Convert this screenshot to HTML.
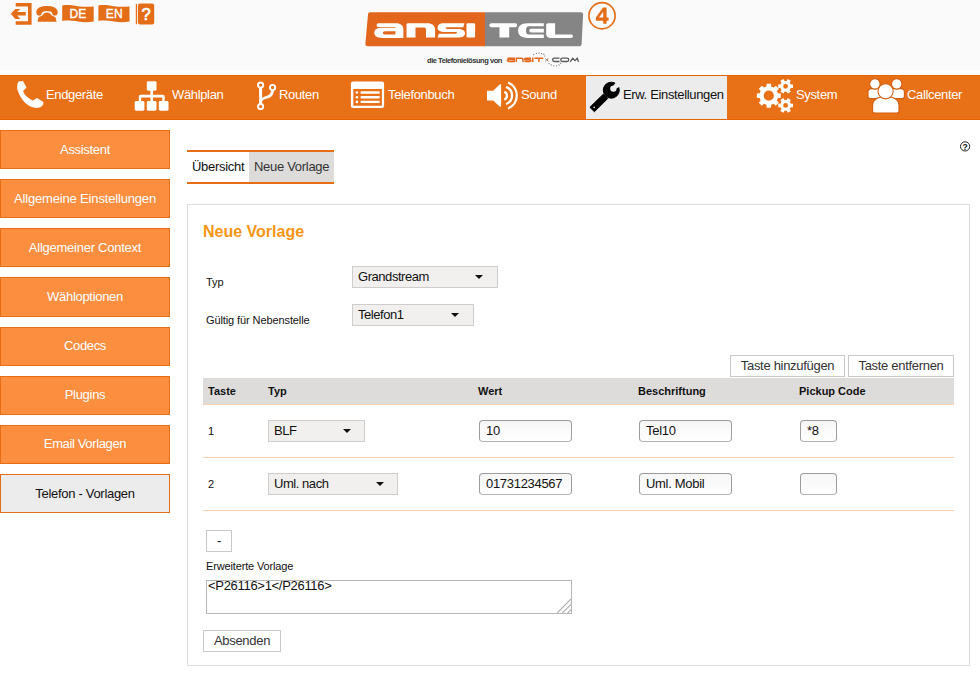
<!DOCTYPE html>
<html><head><meta charset="utf-8">
<style>
*{box-sizing:border-box;margin:0;padding:0}
html,body{width:980px;height:680px;overflow:hidden;background:#fff;font-family:"Liberation Sans",sans-serif;color:#222}
.a{position:absolute;white-space:nowrap}
#top{left:0;top:0;width:980px;height:70px;background:#fafafa}
#nav{left:0;top:75px;width:980px;height:45px;background:#e87016;border-top:1px solid #e36500;border-bottom:1px solid #e36500}
.nt{position:absolute;top:87px;color:#fff;font-size:13px;line-height:15px;letter-spacing:-0.35px;white-space:nowrap}
.side{position:absolute;left:0;width:170px;height:39px;background:#fb8e3f;border:1px solid #e46d15;color:#fff;font-size:13px;text-align:center;line-height:37px;letter-spacing:-0.17px}
.side.act{background:#ececec;color:#111;height:40px;line-height:39px}
.lbl{position:absolute;font-size:11px;color:#111;white-space:nowrap}
.sel{position:absolute;height:22px;background:#f1f0ef;border:1px solid #cfcdcb;font-size:13px;line-height:20px;padding-left:5px;color:#111;letter-spacing:-0.45px;white-space:nowrap}
.sel i{position:absolute;top:8px;width:0;height:0;border-left:4px solid transparent;border-right:4px solid transparent;border-top:4px solid #111}
.inp{position:absolute;height:22px;background:linear-gradient(#f6f6f6,#fff);border:1px solid #9c9c9c;border-bottom-color:#b4b4b4;border-radius:4px;font-size:13px;line-height:20px;padding-left:6px;color:#111;letter-spacing:-0.3px;white-space:nowrap}
.btn{position:absolute;height:22px;background:#fff;border:1px solid #c8c8c8;font-size:13px;line-height:20px;text-align:center;color:#333;letter-spacing:-0.3px;white-space:nowrap}
.th{position:absolute;top:385px;font-size:11px;font-weight:bold;color:#111;line-height:13px}
.td{position:absolute;font-size:11px;color:#111;line-height:13px}
.rl{position:absolute;left:203px;width:751px;height:1px;background:#fbd2b0}
</style></head><body>
<div id="top" class="a"></div>

<!-- header icons -->
<svg class="a" style="left:0;top:0" width="160" height="30" viewBox="0 0 160 30">
  <g fill="#e46d17">
    <!-- exit -->
    <path d="M15.7,3 H31.6 V24.8 H15.7 V21.3 H28 V6.6 H15.7 Z"/>
    <path d="M10.8,13.8 L15.3,8.9 H20.3 L17.2,12 H25.8 V15.6 H17.2 L20.3,19 H15.3 Z"/>
    <!-- phone -->
    <path d="M36.3,12.5 C36.3,7.5 42,6.1 47,6.1 C52,6.1 57.7,7.5 57.7,12.5 C57.7,14.5 56.5,15.6 55,15.6 C53.3,15.6 52.2,14.6 52.2,13 C51.5,11.8 49.5,11.1 47,11.1 C44.5,11.1 42.5,11.8 41.8,13 C41.8,14.6 40.7,15.6 39,15.6 C37.5,15.6 36.3,14.5 36.3,12.5 Z"/>
    <path d="M42.3,15.5 C43.3,13.8 45,12.6 47,12.6 C49,12.6 50.7,13.8 51.7,15.5 L55.5,17.3 L56.5,21.7 H37.5 L38.5,17.3 Z"/>
    <!-- DE flag -->
    <path d="M62.2,5.4 C67,4.6 72,5.3 78,6.2 C84,7.1 89,6.9 93.7,6.4 V21.6 C89,22.3 84,22.5 78,21.6 C72,20.7 67,20.2 62.2,21 Z"/>
    <path d="M98.4,5.4 C103,4.6 108,5.3 114,6.2 C120,7.1 125,6.9 129.5,6.4 V21.6 C125,22.3 120,22.5 114,21.6 C108,20.7 103,20.2 98.4,21 Z"/>
    <!-- help -->
    <rect x="135.8" y="4" width="1.3" height="20.2"/>
    <rect x="138" y="3.6" width="16.2" height="20.9" rx="2"/>
  </g>
  <g fill="#fff" font-family="Liberation Sans" font-size="12" font-weight="normal" stroke="#fff" stroke-width="0.35">
    <text x="69.6" y="18.4" letter-spacing="0.1">DE</text>
    <text x="105.8" y="18.4" letter-spacing="0.1">EN</text>
    <text x="141.4" y="20.3" font-size="16.5" font-weight="normal" stroke-width="0.7">?</text>
  </g>
</svg>

<!-- logo -->
<svg class="a" style="left:360px;top:0" width="262" height="70" viewBox="360 0 262 70">
  <path d="M370,12.3 H485 V46.2 H368 C366,46.2 365.2,45 365.4,43.5 L368,14.5 C368.2,13 369,12.3 370,12.3 Z" fill="#e2661b"/>
  <path d="M485,12.3 H581 C582.5,12.3 583.2,13.2 583.1,14.5 L581.6,44 C581.5,45.4 580.8,46.2 579.5,46.2 H485 Z" fill="#858585"/>
  <g fill="#fff">
    <!-- a -->
    <path fill-rule="evenodd" d="M378.5,23.2 H396 C400.8,23.2 403.4,25.5 403.4,29.5 V37.9 H382.5 C376.5,37.9 374.3,35.8 374.3,32.8 C374.3,29.8 376.5,27.8 382.5,27.8 H395.5 C395.5,27.4 395,27.1 393.5,27.1 H378.5 C377.3,27.1 376.6,26.2 376.6,25.15 C376.6,24.1 377.3,23.2 378.5,23.2 Z M385,31.2 C383.6,31.2 382.9,32 382.9,32.85 C382.9,33.7 383.6,34.5 385,34.5 H395.4 V31.2 Z"/>
    <!-- n -->
    <path d="M408,23.3 H427 C432.5,23.3 435.1,26 435.1,30 V37.6 H426 V29.5 C426,28 425.3,27.4 423.5,27.4 H415.5 V37.6 H406.5 V24.8 C406.5,23.8 407,23.3 408,23.3 Z"/>
    <!-- s -->
    <path d="M443.5,23.3 H464.5 L463.3,27.2 H447.5 C446.3,27.2 445.7,27.5 445.7,28.05 C445.7,28.6 446.3,28.9 447.5,28.9 H457.5 C462.8,28.9 465,30.6 465,33.25 C465,36 462.8,37.6 457.5,37.6 H437.6 L438.8,33.7 H455.3 C456.5,33.7 457,33.4 457,32.85 C457,32.3 456.5,32 455.3,32 H445 C439.7,32 437.6,30.3 437.6,27.7 C437.6,25 439.7,23.3 443.5,23.3 Z"/>
    <!-- i -->
    <rect x="466.5" y="23.3" width="8.6" height="14.3" rx="1"/>
    <!-- T -->
    <path d="M491.4,23.3 H515.5 C516.6,23.3 517.1,24.2 517.1,25.25 C517.1,26.3 516.6,27.2 515.5,27.2 H509.2 V37.6 H499.5 V27.2 H491.4 C490.2,27.2 489.4,26.3 489.4,25.25 C489.4,24.2 490.2,23.3 491.4,23.3 Z"/>
    <!-- E -->
    <path d="M527.5,23.2 H543.8 V26.3 H528.5 C526.8,26.3 526,28 526,30.5 C526,33 526.8,34.5 528.5,34.5 H543.8 V37.9 H527.5 C521,37.9 518.1,35 518.1,30.55 C518.1,26 521,23.2 527.5,23.2 Z"/>
    <path d="M531,28.7 H543.8 V32.4 H531 C530,32.4 529.4,31.6 529.4,30.55 C529.4,29.5 530,28.7 531,28.7 Z"/>
    <!-- L -->
    <path d="M548,23.2 H555.1 V34.5 H571 C572.2,34.5 572.9,35.2 572.9,36.2 C572.9,37.2 572.2,37.9 571,37.9 H551 C548,37.9 546.2,36.5 546.2,34 V25 C546.2,23.9 547,23.2 548,23.2 Z"/>
  </g>
  <circle cx="602" cy="15.75" r="13.1" fill="none" stroke="#e46d17" stroke-width="1.7"/>
  <path fill="#e46d17" fill-rule="evenodd" d="M603,7.5 H606.6 V17.4 H608.6 V20.7 H606.6 V23.8 H603.2 V20.7 H595.9 V17.5 Z M603.2,11.7 L599,17.4 H603.2 Z"/>
  <text x="427" y="62.6" font-family="Liberation Sans" font-size="7.5" font-weight="bold" fill="#333" letter-spacing="-0.45">die Telefonielösung von</text>
  <g fill="none" stroke="#e2661b" stroke-width="1.5">
    <path d="M507.5,58.2 H514.2 V61.4 H509 Q507.3,61.4 507.3,60.35 Q507.3,59.5 509,59.5 H514.2"/>
    <path d="M516.3,61.9 V58.2 H521.5 Q523,58.2 523,59.5 V61.9"/>
    <path d="M531,58.2 H526 Q524.6,58.2 524.6,59 Q524.6,59.8 526,59.8 H529.5 Q531,59.8 531,60.6 Q531,61.4 529.5,61.4 H524.4"/>
    <path d="M532.8,57.6 V61.9"/>
    <path d="M534.5,58.2 H543.3 M538.9,58.2 V61.9"/>
  </g>
  <g fill="none" stroke="#5a5a5a" stroke-width="1.3">
    <path d="M559.5,58.2 H554.5 Q552.6,58.2 552.6,59.85 Q552.6,61.5 554.5,61.5 H559.5"/>
    <path d="M562.5,58.2 H567 Q568.8,58.2 568.8,59.85 Q568.8,61.5 567,61.5 H562.5 Q560.7,61.5 560.7,59.85 Q560.7,58.2 562.5,58.2 Z"/>
    <path d="M570.2,61.9 L572.7,58.2 L575,60.6 L577.3,58.2 L578.5,61.9"/>
  </g>
  <g fill="#666">
    <circle cx="533.8" cy="54.6" r=".6"/><circle cx="536.4" cy="53.5" r=".6"/><circle cx="539" cy="53.1" r=".6"/><circle cx="541.6" cy="53.5" r=".6"/><circle cx="543.8" cy="54.2" r=".6"/><circle cx="544.8" cy="56" r=".6"/>
    <circle cx="549" cy="63.6" r=".6"/><circle cx="551.2" cy="64.9" r=".6"/><circle cx="553.8" cy="65.8" r=".6"/><circle cx="556.4" cy="65.8" r=".6"/><circle cx="559" cy="64.9" r=".6"/><circle cx="560.7" cy="63.2" r=".6"/>
    <path d="M545.2,58.3 L548.4,61.2 M548.4,58.3 L545.2,61.2" stroke="#7a8a99" stroke-width=".9"/><circle cx="547.6" cy="60.2" r=".7" fill="#e2661b"/>
  </g>
</svg>

<div id="nav" class="a"></div>

<!-- nav icons -->
<svg class="a" style="left:0;top:75px" width="980" height="45" viewBox="0 75 980 45">
  <g fill="#fff">
    <!-- phone -->
    <path d="M18.5,81.5 L23,81 L26.5,87.5 L23,91 Q25,97 33,100.5 L37,98 L43.3,102 L43.3,104.5 Q41,108 36,108 Q23,106 17.5,90 Q16.5,85 18.5,81.5 Z"/>
    <!-- sitemap -->
    <rect x="146.8" y="81.3" width="9.7" height="9.4" rx="1.4"/>
    <rect x="150.4" y="90" width="2.6" height="11.5"/>
    <path d="M138.8,101 V96.5 Q138.8,94.8 140.5,94.8 H163 Q164.7,94.8 164.7,96.5 V101 H162.3 V97.5 H141.2 V101 Z"/>
    <rect x="134.7" y="101" width="9.7" height="9.7" rx="1.4"/>
    <rect x="146.8" y="101" width="9.7" height="9.7" rx="1.4"/>
    <rect x="158.8" y="101" width="9.7" height="9.7" rx="1.4"/>
  </g>
  <g fill="none" stroke="#fff">
    <!-- routen -->
    <circle cx="260.6" cy="85.1" r="2.6" stroke-width="1.9"/>
    <circle cx="260.6" cy="106.6" r="2.6" stroke-width="1.9"/>
    <circle cx="272.6" cy="87.5" r="2.6" stroke-width="1.9"/>
    <path d="M260.6,87.7 V104" stroke-width="3"/>
    <path d="M272.6,90 Q272.6,96 266,97.5 Q261,99 261,101" stroke-width="2.8"/>
  </g>
  <g fill="#fff">
    <!-- telefonbuch -->
    <path fill-rule="evenodd" d="M353,81.6 H382 Q384.1,81.6 384.1,83.7 V105.9 Q384.1,108 382,108 H353 Q350.9,108 350.9,105.9 V83.7 Q350.9,81.6 353,81.6 Z M353.3,88.9 V105.7 H381.9 V88.9 Z"/>
    <circle cx="356.9" cy="92.5" r="1.3"/><circle cx="356.9" cy="97.2" r="1.3"/><circle cx="356.9" cy="101.9" r="1.3"/>
    <rect x="360.5" y="91.3" width="19.3" height="2.4" rx="1"/>
    <rect x="360.5" y="96" width="19.3" height="2.4" rx="1"/>
    <rect x="360.5" y="100.7" width="19.3" height="2.4" rx="1"/>
    <!-- sound -->
    <path d="M487,90.7 H493.2 L499.6,84.6 Q501.1,83.6 501.1,85.5 V105.6 Q501.1,107.5 499.6,106.5 L493.2,100.4 H487 Z"/>
  </g>
  <g fill="none" stroke="#fff" stroke-width="2.3">
    <path d="M504.3,91.8 A4.2,4.2 0 0 1 504.3,99.6"/>
    <path d="M506,87 A9,9 0 0 1 506,104"/>
    <path d="M508,82.5 A14,14 0 0 1 508,108.5"/>
  </g>
  <!-- active box -->
  <rect x="586" y="76" width="141" height="43" fill="#ececec"/>
  <!-- wrench -->
  <g fill="#000" stroke="#000" stroke-width="1" stroke-linejoin="round">
    <circle cx="611.3" cy="90.2" r="8" />
    <path d="M603.3,94.2 L607.7,98.6 L594.4,111.7 L589.9,107.3 Z"/>
  </g>
  <g fill="#ececec">
    <circle cx="613.4" cy="88.6" r="3.2"/>
    <path d="M613.4,85.4 L617.5,80.5 L622,85 L616.6,88.6 Z"/>
    <circle cx="594.2" cy="107.4" r=".8"/>
  </g>
  <!-- gears -->
  <path fill="#fff" fill-rule="evenodd" d="M766.39,86.61 L766.66,83.69 L770.94,83.69 L771.21,86.61 L773.52,87.57 L775.78,85.69 L778.81,88.72 L776.93,90.98 L777.89,93.29 L780.81,93.56 L780.81,97.84 L777.89,98.11 L776.93,100.42 L778.81,102.68 L775.78,105.71 L773.52,103.83 L771.21,104.79 L770.94,107.71 L766.66,107.71 L766.39,104.79 L764.08,103.83 L761.82,105.71 L758.79,102.68 L760.67,100.42 L759.71,98.11 L756.79,97.84 L756.79,93.56 L759.71,93.29 L760.67,90.98 L758.79,88.72 L761.82,85.69 L764.08,87.57Z M773.90,95.70 A5.1,5.1 0 1 0 763.70,95.70 A5.1,5.1 0 1 0 773.90,95.70Z"/>
  <path fill="#fff" fill-rule="evenodd" d="M790.81,84.55 L792.99,84.53 L792.99,88.07 L790.81,88.05 L789.73,89.94 L790.83,91.81 L787.76,93.59 L786.69,91.69 L784.51,91.69 L783.44,93.59 L780.37,91.81 L781.47,89.94 L780.39,88.05 L778.21,88.07 L778.21,84.53 L780.39,84.55 L781.47,82.66 L780.37,80.79 L783.44,79.01 L784.51,80.91 L786.69,80.91 L787.76,79.01 L790.83,80.79 L789.73,82.66Z M788.00,86.30 A2.4,2.4 0 1 0 783.20,86.30 A2.4,2.4 0 1 0 788.00,86.30Z"/>
  <path fill="#fff" fill-rule="evenodd" d="M790.81,103.65 L792.99,103.63 L792.99,107.17 L790.81,107.15 L789.73,109.04 L790.83,110.91 L787.76,112.69 L786.69,110.79 L784.51,110.79 L783.44,112.69 L780.37,110.91 L781.47,109.04 L780.39,107.15 L778.21,107.17 L778.21,103.63 L780.39,103.65 L781.47,101.76 L780.37,99.89 L783.44,98.11 L784.51,100.01 L786.69,100.01 L787.76,98.11 L790.83,99.89 L789.73,101.76Z M788.00,105.40 A2.4,2.4 0 1 0 783.20,105.40 A2.4,2.4 0 1 0 788.00,105.40Z"/>
  <!-- callcenter -->
  <g fill="#fff" stroke="#d05e12" stroke-width="1.1">
    <path d="M868,92 Q868,88.6 871.5,88.6 H878.5 Q882,88.6 882,92 V96.6 Q882,98.6 880,98.6 H870 Q868,98.6 868,96.6 Z"/>
    <path d="M890.4,92 Q890.4,88.6 893.9,88.6 H900.9 Q904.4,88.6 904.4,92 V96.6 Q904.4,98.6 902.4,98.6 H892.4 Q890.4,98.6 890.4,96.6 Z"/>
    <circle cx="874.9" cy="83.9" r="5.2"/>
    <circle cx="896.7" cy="83.9" r="5.2"/>
    <path d="M872.6,106 Q872.6,96.8 885.8,96.8 Q899,96.8 899,106 V111 Q899,113 897,113 H874.6 Q872.6,113 872.6,111 Z"/>
    <circle cx="885.6" cy="91.3" r="7.6"/>
  </g>
</svg>

<div class="nt" style="left:46px">Endgeräte</div>
<div class="nt" style="left:172px">Wählplan</div>
<div class="nt" style="left:279px">Routen</div>
<div class="nt" style="left:388px">Telefonbuch</div>
<div class="nt" style="left:521px">Sound</div>
<div class="nt" style="left:623px;color:#111">Erw. Einstellungen</div>
<div class="nt" style="left:796px">System</div>
<div class="nt" style="left:907px">Callcenter</div>

<!-- sidebar -->
<div class="side" style="top:130px;letter-spacing:-0.32px">Assistent</div>
<div class="side" style="top:179px">Allgemeine Einstellungen</div>
<div class="side" style="top:228px;letter-spacing:-0.25px">Allgemeiner Context</div>
<div class="side" style="top:277px;height:40px;line-height:38px;letter-spacing:-0.3px">Wähloptionen</div>
<div class="side" style="top:327px;line-height:35px;letter-spacing:-0.35px">Codecs</div>
<div class="side" style="top:376px;line-height:35px;letter-spacing:-0.3px">Plugins</div>
<div class="side" style="top:425px;line-height:35px;letter-spacing:-0.37px">Email Vorlagen</div>
<div class="side act" style="top:474px;height:39px;line-height:37px;letter-spacing:-0.3px">Telefon - Vorlagen</div>

<!-- tabs -->
<div class="a" style="left:187px;top:150px;width:147px;height:2px;background:#e46d15"></div>
<div class="a" style="left:187px;top:182px;width:147px;height:2px;background:#e46d15"></div>
<div class="a" style="left:249px;top:152px;width:85px;height:30px;background:#dddcdb"></div>
<div class="a" style="left:192px;top:159px;font-size:13px;line-height:15px;color:#111;letter-spacing:-0.3px">Übersicht</div>
<div class="a" style="left:254px;top:159px;font-size:13px;line-height:15px;color:#333;letter-spacing:-0.3px">Neue Vorlage</div>

<!-- help -->
<svg class="a" style="left:958px;top:139px" width="15" height="15" viewBox="958 139 15 15">
  <circle cx="965.1" cy="146.4" r="4.6" fill="none" stroke="#222" stroke-width="1"/>
  <text x="962.6" y="149.6" font-family="Liberation Sans" font-size="8.6" font-weight="bold" fill="#111">?</text>
</svg>

<!-- panel -->
<div class="a" style="left:187px;top:204px;width:783px;height:462px;border:1px solid #dcdcdc"></div>

<div class="a" style="left:203px;top:223px;font-size:16px;font-weight:bold;color:#f99514;line-height:18px">Neue Vorlage</div>

<div class="lbl" style="left:206px;top:276px">Typ</div>
<div class="sel" style="left:352px;top:266px;width:146px">Grandstream<i style="left:122px"></i></div>
<div class="lbl" style="left:206px;top:314px;letter-spacing:-0.1px">Gültig für Nebenstelle</div>
<div class="sel" style="left:352px;top:304px;width:122px">Telefon1<i style="left:98px"></i></div>

<div class="btn" style="left:730px;top:355px;width:115px">Taste hinzufügen</div>
<div class="btn" style="left:848px;top:355px;width:106px">Taste entfernen</div>

<!-- table -->
<div class="a" style="left:203px;top:378px;width:751px;height:26px;background:#dddcdb"></div>
<div class="rl" style="top:404px"></div>
<div class="th" style="left:208px">Taste</div>
<div class="th" style="left:268px">Typ</div>
<div class="th" style="left:478px">Wert</div>
<div class="th" style="left:638px">Beschriftung</div>
<div class="th" style="left:799px">Pickup Code</div>

<div class="td" style="left:208px;top:425px">1</div>
<div class="sel" style="left:268px;top:420px;width:97px">BLF<i style="left:74px"></i></div>
<div class="inp" style="left:479px;top:420px;width:93px">10</div>
<div class="inp" style="left:639px;top:420px;width:93px">Tel10</div>
<div class="inp" style="left:800px;top:420px;width:37px">*8</div>
<div class="rl" style="top:457px"></div>

<div class="td" style="left:208px;top:478px">2</div>
<div class="sel" style="left:268px;top:473px;width:130px">Uml. nach<i style="left:107px"></i></div>
<div class="inp" style="left:479px;top:473px;width:93px">01731234567</div>
<div class="inp" style="left:639px;top:473px;width:93px">Uml. Mobil</div>
<div class="inp" style="left:800px;top:473px;width:37px"></div>
<div class="rl" style="top:510px"></div>

<div class="btn" style="left:206px;top:530px;width:26px;color:#111">-</div>
<div class="lbl" style="left:206px;top:560px;letter-spacing:-0.15px">Erweiterte Vorlage</div>
<div class="a" style="left:206px;top:580px;width:366px;height:34px;border:1px solid #b9b6b3;background:#fff"></div>
<div class="a" style="left:208px;top:578px;font-size:13px;line-height:15px;color:#111;letter-spacing:-0.3px">&lt;P26116&gt;1&lt;/P26116&gt;</div>
<svg class="a" style="left:550px;top:595px" width="25" height="22" viewBox="550 595 25 22">
  <path d="M557.2,612.8 L570.9,599.1 M562.5,612.8 L570.9,604.4 M567.8,612.8 L570.9,609.7" stroke="#aaa" stroke-width="1.1"/>
</svg>
<div class="btn" style="left:203px;top:630px;width:78px;color:#333">Absenden</div>

</body></html>
